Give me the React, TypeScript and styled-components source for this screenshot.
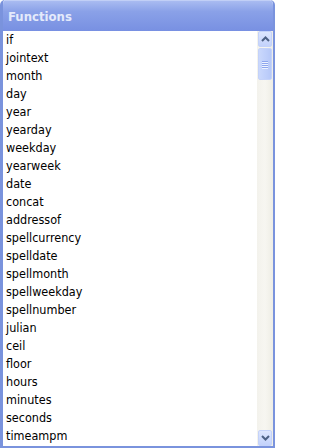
import styled, { createGlobalStyle } from "styled-components";

const GlobalStyle = createGlobalStyle`
  html, body {
    margin: 0;
    padding: 0;
    background: #ffffff;
  }
`;

// ---------- panel ----------

const Panel = styled.div`
  box-sizing: border-box;
  width: 275px;
  height: 448px;
  display: flex;
  flex-direction: column;
  border: 2px solid #7a93dd;
  border-left-width: 3px;
  border-top-width: 0;
  border-radius: 5px 5px 0 0;
  overflow: hidden;
  font-family: "DejaVu Sans Condensed", Tahoma, "DejaVu Sans", sans-serif;
`;

const Header = styled.div`
  box-sizing: border-box;
  flex: 0 0 31px;
  display: flex;
  align-items: center;
  padding: 1px 0 0 8px;
  margin-left: -3px;
  margin-right: -2px;
  background: linear-gradient(to bottom, #a9bbf1 0%, #8aa1e8 35%, #7890e2 100%);
  border-top: 1px solid #c1cff6;
  border-radius: 5px 5px 0 0;
  color: #e4eafb;
  font-size: 13px;
  font-weight: bold;
`;

const Body = styled.div`
  flex: 1;
  display: flex;
  min-height: 0;
  background: #ffffff;
`;

const List = styled.ul`
  flex: 1;
  margin: 0;
  padding: 0;
  list-style: none;
  overflow: hidden;
`;

const Item = styled.li`
  height: 18px;
  line-height: 18px;
  padding-left: 3px;
  font-size: 12.5px;
  color: #000000;
  white-space: nowrap;
`;

// ---------- scrollbar ----------

const ScrollBar = styled.div`
  flex: 0 0 16px;
  display: flex;
  flex-direction: column;
  background: linear-gradient(to right, #f3f2ec, #f7f6f1 50%, #eeede5);
`;

const ScrollButton = styled.div`
  box-sizing: border-box;
  height: 16px;
  margin: 0 1px;
  display: flex;
  align-items: center;
  justify-content: center;
  border: 1px solid #c4d2f9;
  border-radius: 2px;
  background: linear-gradient(to bottom, #dde6fe, #c3d2fb);
`;

const Track = styled.div`
  flex: 1;
  display: flex;
  flex-direction: column;
  padding-top: 1px;
`;

const Thumb = styled.div`
  box-sizing: border-box;
  height: 32px;
  margin: 0 1px;
  display: flex;
  flex-direction: column;
  align-items: center;
  justify-content: center;
  gap: 1px;
  border: 1px solid #c4d2f9;
  border-radius: 2px;
  background: linear-gradient(to right, #cad8fc, #c0d0fb 50%, #b6c8f8);
`;

const Grip = styled.span`
  display: block;
  width: 6px;
  height: 1px;
  background: #8ea6ee;
  box-shadow: 0 1px 0 #eef3ff;
`;

const Arrow = ({ down }: { down?: boolean }) => (
  <svg width="9" height="6" viewBox="0 0 9 6">
    <path
      d={down ? "M1 1 L4.5 4.5 L8 1" : "M1 5 L4.5 1.5 L8 5"}
      fill="none"
      stroke="#4d6185"
      strokeWidth="2"
    />
  </svg>
);

const functions = [
  "if",
  "jointext",
  "month",
  "day",
  "year",
  "yearday",
  "weekday",
  "yearweek",
  "date",
  "concat",
  "addressof",
  "spellcurrency",
  "spelldate",
  "spellmonth",
  "spellweekday",
  "spellnumber",
  "julian",
  "ceil",
  "floor",
  "hours",
  "minutes",
  "seconds",
  "timeampm",
];

const App = () => {
  return (
    <>
      <GlobalStyle />
      <Panel>
        <Header>Functions</Header>
        <Body>
          <List>
            {functions.map((name) => (
              <Item key={name}>{name}</Item>
            ))}
          </List>
          <ScrollBar>
            <ScrollButton>
              <Arrow />
            </ScrollButton>
            <Track>
              <Thumb>
                <Grip />
                <Grip />
                <Grip />
                <Grip />
              </Thumb>
            </Track>
            <ScrollButton>
              <Arrow down />
            </ScrollButton>
          </ScrollBar>
        </Body>
      </Panel>
    </>
  );
};

export default App;
